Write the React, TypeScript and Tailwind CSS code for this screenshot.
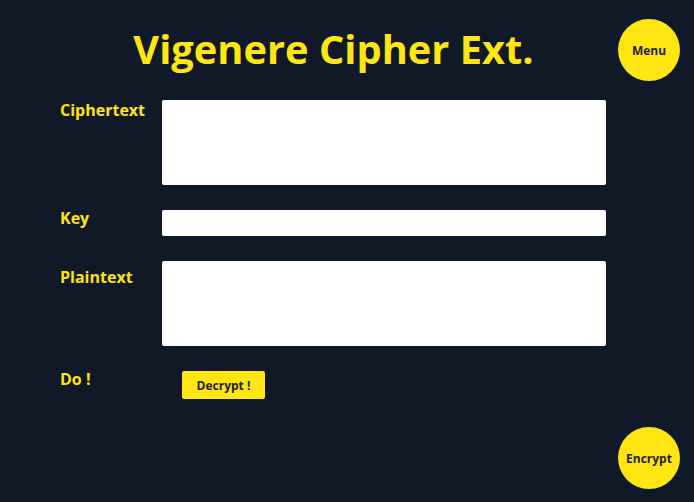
import type { ReactNode } from 'react'

// ─── Field row ────────────────────────────────────────────────────────────────

function Row({ label, labelClass, children }: { label: string; labelClass?: string; children: ReactNode }) {
  return (
    <>
      <label className={'text-base font-bold leading-5 text-[#ffe511] ' + (labelClass ?? '')}>{label}</label>
      <div>{children}</div>
    </>
  )
}

export default function App() {
  return (
    <div
      className="relative h-[502px] w-[694px] overflow-hidden bg-[#111827]"
      style={{ fontFamily: '"Open Sans", "Noto Sans", sans-serif' }}
    >
      <header className="flex justify-center pr-[27px] pt-[22px]">
        <h1 className="text-[39.8px] font-bold leading-[53px] text-[#ffe511]">Vigenere Cipher Ext.</h1>
      </header>

      <button className="absolute left-[618px] top-[19px] flex h-[62px] w-[62px] items-center justify-center rounded-full bg-[#ffe511] pt-[2px] text-xs font-bold text-[#1f2226]">
        Menu
      </button>

      <form className="mt-[25px] grid grid-cols-[102px_444px] gap-y-[25px] pl-[60px]">
        <Row label="Ciphertext">
          <textarea className="block h-[85px] w-full resize-none rounded-[2px] bg-white" />
        </Row>
        <Row label="Key" labelClass="-mt-[2px]">
          <input className="block h-[26px] w-full rounded-[2px] bg-white" />
        </Row>
        <Row label="Plaintext" labelClass="mt-[6px]">
          <textarea className="block h-[85px] w-full resize-none rounded-[2px] bg-white" />
        </Row>
        <Row label="Do !" labelClass="-mt-[2px]">
          <button
            type="button"
            className="ml-[20px] h-[28px] w-[83px] rounded-[2px] bg-[#ffe511] pt-[2px] text-xs font-bold text-[#1f2226]"
          >
            Decrypt !
          </button>
        </Row>
      </form>

      <button className="absolute left-[618px] top-[427px] flex h-[62px] w-[62px] items-center justify-center rounded-full bg-[#ffe511] pt-[2px] text-xs font-bold text-[#1f2226]">
        Encrypt
      </button>
    </div>
  )
}
